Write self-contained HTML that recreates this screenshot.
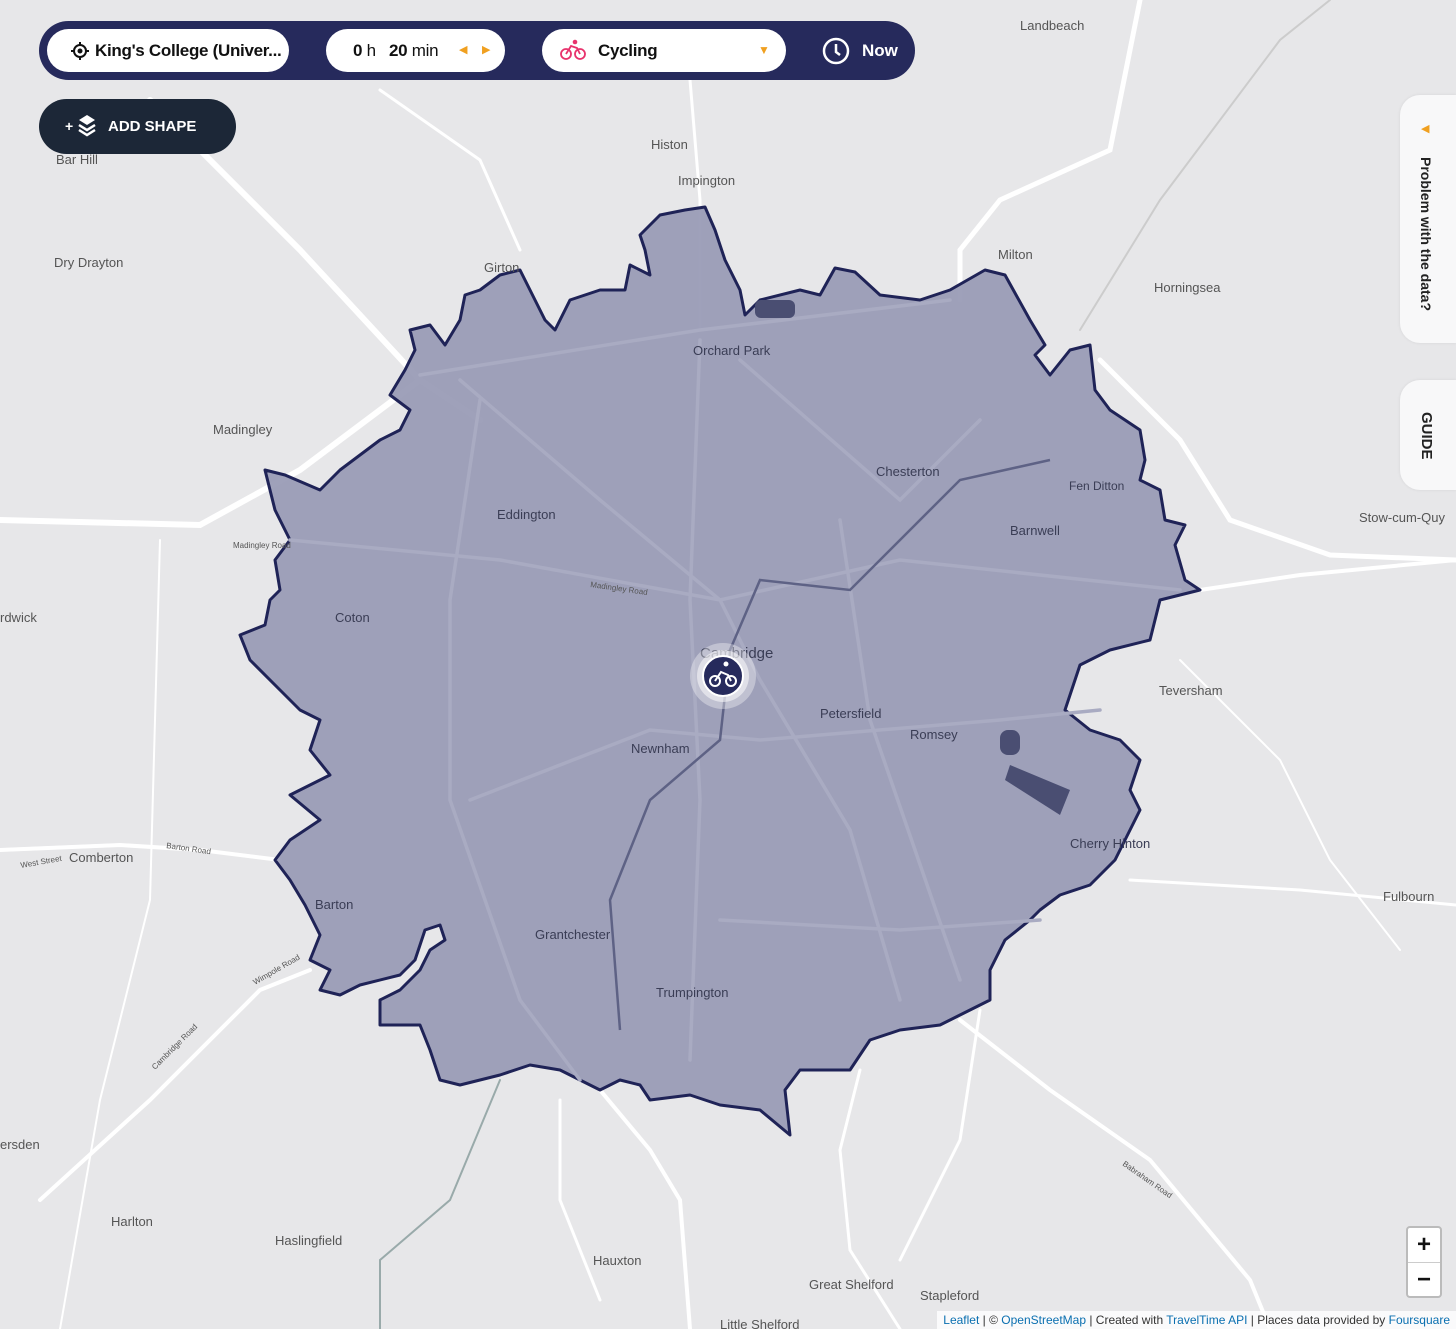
<!DOCTYPE html>
<html><head><meta charset="utf-8"><style>
html,body{margin:0;padding:0;width:1456px;height:1329px;overflow:hidden;background:#e6e6e8;font-family:"Liberation Sans","DejaVu Sans",sans-serif}
#map{position:absolute;left:0;top:0}
.lbl{font-family:"Liberation Sans",sans-serif;font-size:13px;fill:#555}
.lbl.in{fill:#3a3d55}
.sm{font-size:8px;fill:#555}
.bar{position:absolute;left:39px;top:21px;width:876px;height:59px;background:#262a5c;border-radius:30px}
.pill{position:absolute;top:8px;height:43px;background:#fff;border-radius:22px;font-size:17px;font-weight:bold;color:#111;line-height:43px;box-sizing:border-box;white-space:nowrap;letter-spacing:-0.3px}
.add{position:absolute;left:39px;top:99px;width:197px;height:55px;background:#1c2737;border-radius:28px;color:#fff;font-weight:bold;font-size:15px;line-height:55px}
.tab{position:absolute;right:0;width:56px;background:#f8f8f9;border-radius:20px 0 0 20px;box-shadow:0 0 3px rgba(0,0,0,.08)}
.vt{position:absolute;writing-mode:vertical-rl;font-weight:bold;color:#222;font-size:14px}
.attr{position:absolute;right:0;bottom:0;height:18px;background:rgba(255,255,255,.8);font-size:12px;line-height:18px;padding:0 6px;color:#333}
.attr a{color:#0a6fb0;text-decoration:none}
.zoom{position:absolute;left:1406px;top:1226px;width:36px;height:72px;background:#fff;border:2px solid #bbb;border-radius:4px;box-sizing:border-box}
.zoom div{height:34px;text-align:center;line-height:34px;font-size:24px;font-weight:bold;color:#111}
</style></head><body>
<svg id="map" width="1456" height="1329" viewBox="0 0 1456 1329">
<rect width="1456" height="1329" fill="#e7e7e9"/>
<g fill="none" stroke="#fff" stroke-linecap="round">
<path d="M150 100 L300 250 L420 380 L480 420" stroke-width="6"/>
<path d="M0 520 L200 525 L300 470 L420 380" stroke-width="6"/>
<path d="M1140 0 L1110 150 L1000 200 L960 250 L960 300" stroke-width="5"/>
<path d="M1100 360 L1180 440 L1230 520 L1330 555 L1456 560" stroke-width="5"/>
<path d="M1200 590 L1300 575 L1456 560" stroke-width="4"/>
<path d="M0 850 L120 845 L200 850 L280 860" stroke-width="4"/>
<path d="M40 1200 L150 1100 L260 990 L310 970" stroke-width="4"/>
<path d="M600 1090 L650 1150 L680 1200 L690 1329" stroke-width="4"/>
<path d="M960 1020 L1050 1090 L1150 1160 L1250 1280 L1270 1329" stroke-width="4"/>
<path d="M860 1070 L840 1150 L850 1250 L900 1329" stroke-width="3"/>
<path d="M980 1010 L960 1140 L900 1260" stroke-width="3"/>
<path d="M1130 880 L1300 890 L1456 905" stroke-width="3"/>
<path d="M690 80 L700 200 L700 330" stroke-width="3"/>
<path d="M380 90 L480 160 L520 250" stroke-width="3"/>
<path d="M560 1100 L560 1200 L600 1300" stroke-width="3"/>
<path d="M160 540 L150 900 L100 1100 L60 1329" stroke-width="2"/>
<path d="M1180 660 L1280 760 L1330 860 L1400 950" stroke-width="2"/>
<path d="M1330 0 L1280 40 L1160 200 L1080 330" stroke="#ccc" stroke-width="2"/>
<path d="M500 1080 L450 1200 L380 1260 L380 1329" stroke="#9aa" stroke-width="2"/>
</g>
<path fill="#9a9cb6" fill-opacity="0.95" stroke="#1f2357" stroke-width="3" stroke-linejoin="round" d="M640 235 L660 215 L685 210 L705 207 L715 230 L725 260 L740 290 L745 315 L760 300 L800 290 L820 295 L835 268 L855 272 L880 295 L920 300 L950 290 L985 270 L1005 275 L1030 320 L1045 345 L1035 355 L1050 375 L1070 350 L1090 345 L1095 390 L1110 410 L1140 430 L1145 460 L1140 480 L1160 490 L1165 520 L1185 525 L1175 545 L1185 580 L1200 590 L1180 595 L1160 600 L1150 640 L1110 650 L1080 665 L1065 710 L1090 730 L1120 740 L1140 760 L1130 790 L1140 810 L1130 830 L1115 860 L1090 885 L1060 895 L1040 910 L1030 920 L1005 940 L990 970 L990 1000 L960 1015 L940 1025 L900 1030 L870 1040 L850 1070 L800 1070 L785 1090 L790 1135 L760 1110 L720 1105 L690 1095 L650 1100 L640 1085 L620 1080 L600 1090 L560 1070 L530 1065 L500 1075 L460 1085 L440 1080 L430 1050 L420 1025 L380 1025 L380 1000 L400 990 L420 970 L430 950 L445 940 L440 925 L425 930 L415 960 L400 975 L360 985 L340 995 L320 990 L330 970 L310 960 L320 935 L305 905 L290 880 L275 860 L290 840 L320 820 L290 795 L330 775 L310 750 L320 720 L300 710 L280 690 L250 660 L240 635 L265 625 L270 600 L280 590 L275 560 L290 540 L275 510 L265 470 L285 475 L320 490 L340 470 L360 455 L380 440 L400 430 L410 410 L390 395 L405 370 L415 350 L410 330 L430 325 L445 345 L460 320 L465 295 L480 290 L500 275 L520 270 L530 290 L545 320 L555 330 L570 300 L600 290 L625 290 L630 265 L650 275 L645 250 Z"/>
<g fill="none" stroke="#a9abc2" stroke-width="3.5" stroke-linecap="round">
<path d="M420 375 L700 330 L950 300"/>
<path d="M460 380 L600 500 L720 600 L760 680 L850 830 L900 1000"/>
<path d="M290 540 L500 560 L720 600 L900 560 L1180 590"/>
<path d="M480 400 L450 600 L450 800 L520 1000 L580 1080"/>
<path d="M700 340 L690 600 L700 800 L690 1060"/>
<path d="M740 360 L900 500 L980 420"/>
<path d="M840 520 L870 720 L960 980"/>
<path d="M470 800 L650 730 L760 740 L1000 720 L1100 710"/>
<path d="M720 920 L900 930 L1040 920"/>
</g>
<path d="M620 1030 L610 900 L650 800 L720 740 L730 650 L760 580 L850 590 L900 540 L960 480 L1050 460" fill="none" stroke="#5e6285" stroke-width="2.5"/>
<g fill="#4a4e72"><rect x="1000" y="730" width="20" height="25" rx="8"/><path d="M1010 765 L1070 790 L1060 815 L1005 780Z"/><rect x="755" y="300" width="40" height="18" rx="6"/></g>
<g class="lbl">
<text x="1020" y="30">Landbeach</text><text x="56" y="164">Bar Hill</text><text x="651" y="149">Histon</text><text x="678" y="185">Impington</text>
<text x="54" y="267">Dry Drayton</text><text x="484" y="272">Girton</text><text x="998" y="259">Milton</text><text x="1154" y="292">Horningsea</text>
<text x="213" y="434">Madingley</text><text x="1359" y="522">Stow-cum-Quy</text><text x="0" y="622">rdwick</text><text x="1159" y="695">Teversham</text>
<text x="69" y="862">Comberton</text><text x="1383" y="901">Fulbourn</text><text x="0" y="1149">ersden</text><text x="111" y="1226">Harlton</text>
<text x="275" y="1245">Haslingfield</text><text x="593" y="1265">Hauxton</text><text x="809" y="1289">Great Shelford</text><text x="920" y="1300">Stapleford</text><text x="720" y="1329">Little Shelford</text>
</g>
<g class="lbl in">
<text x="693" y="355">Orchard Park</text><text x="876" y="476">Chesterton</text><text x="1069" y="490" font-size="12">Fen Ditton</text>
<text x="497" y="519">Eddington</text><text x="1010" y="535">Barnwell</text><text x="335" y="622">Coton</text><text x="700" y="658" font-size="15">Cambridge</text>
<text x="820" y="718">Petersfield</text><text x="910" y="739">Romsey</text><text x="631" y="753">Newnham</text><text x="1070" y="848">Cherry Hinton</text>
<text x="315" y="909">Barton</text><text x="535" y="939">Grantchester</text><text x="656" y="997">Trumpington</text>
</g>
<g class="lbl sm"><text x="233" y="548">Madingley Road</text><text x="590" y="587" transform="rotate(8 590 587)">Madingley Road</text>
<text x="166" y="848" transform="rotate(8 166 848)">Barton Road</text><text x="21" y="868" transform="rotate(-10 21 868)">West Street</text>
<text x="255" y="985" transform="rotate(-30 255 985)">Wimpole Road</text><text x="155" y="1070" transform="rotate(-45 155 1070)">Cambridge Road</text>
<text x="1122" y="1165" transform="rotate(35 1122 1165)">Babraham Road</text></g>
<circle cx="723" cy="676" r="33" fill="#fff" opacity="0.35"/><circle cx="723" cy="676" r="26" fill="#fff" opacity="0.5"/>
<circle cx="723" cy="676" r="20" fill="#262a5c" stroke="#fff" stroke-width="2"/>
<g fill="none" stroke="#fff" stroke-width="2"><circle cx="715" cy="681" r="5"/><circle cx="731" cy="681" r="5"/><path d="M715 681 L721 672 L728 675 L731 681"/></g><circle cx="726" cy="664" r="2.5" fill="#fff"/>
</svg>
<div class="bar">
<div class="pill" style="left:8px;width:242px;padding-left:48px;overflow:hidden">King's College (Univer...
<svg style="position:absolute;left:24px;top:13px" width="18" height="18" viewBox="0 0 18 18"><circle cx="9" cy="9" r="6" fill="none" stroke="#111" stroke-width="2"/><circle cx="9" cy="9" r="2.5" fill="#111"/><path d="M9 0v3M9 15v3M0 9h3M15 9h3" stroke="#111" stroke-width="2"/></svg></div>
<div class="pill" style="left:287px;width:179px;padding-left:27px">0<span style="font-weight:normal"> h</span>&nbsp;&nbsp; 20<span style="font-weight:normal"> min</span>
<span style="position:absolute;left:133px;color:#f0a020;font-size:11px">◀</span><span style="position:absolute;left:156px;color:#f0a020;font-size:11px">▶</span></div>
<div class="pill" style="left:503px;width:244px;padding-left:56px">Cycling
<svg style="position:absolute;left:18px;top:10px" width="26" height="22" viewBox="0 0 26 22"><g fill="none" stroke="#e8336d" stroke-width="1.8"><circle cx="6" cy="15" r="5"/><circle cx="20" cy="15" r="5"/><path d="M6 15 L11 7 L17 9 L20 15"/></g><circle cx="15" cy="3" r="2.3" fill="#e8336d"/></svg>
<span style="position:absolute;left:216px;top:0;color:#f0a020;font-size:12px">▼</span></div>
<svg style="position:absolute;left:783px;top:16px" width="28" height="28" viewBox="0 0 28 28"><circle cx="14" cy="14" r="12" fill="none" stroke="#fff" stroke-width="2.5"/><path d="M14 7v8l4 3" fill="none" stroke="#fff" stroke-width="2.5"/></svg>
<div style="position:absolute;left:823px;top:0;line-height:59px;color:#fff;font-weight:bold;font-size:17px">Now</div>
</div>
<div class="add"><span style="position:absolute;left:26px;font-size:14px">+</span>
<svg style="position:absolute;left:38px;top:15px" width="20" height="24" viewBox="0 0 20 24"><path d="M10 1 L18 6 L10 11 L2 6Z" fill="#fff"/><path d="M2 11 L10 16 L18 11 M2 16 L10 21 L18 16" fill="none" stroke="#fff" stroke-width="2.5"/></svg>
<span style="position:absolute;left:69px">ADD SHAPE</span></div>
<div class="tab" style="top:95px;height:248px"><span style="position:absolute;left:21px;top:27px;color:#f0a020;font-size:11px">◀</span><div class="vt" style="left:18px;top:62px">Problem with the data?</div></div>
<div class="tab" style="top:380px;height:110px"><div class="vt" style="left:18px;top:32px;font-size:15px">GUIDE</div></div>
<div class="zoom"><div style="border-bottom:1px solid #ccc">+</div><div>−</div></div>
<div class="attr"><a>Leaflet</a> | © <a>OpenStreetMap</a> | Created with <a>TravelTime API</a> | Places data provided by <a>Foursquare</a></div>
</body></html>
